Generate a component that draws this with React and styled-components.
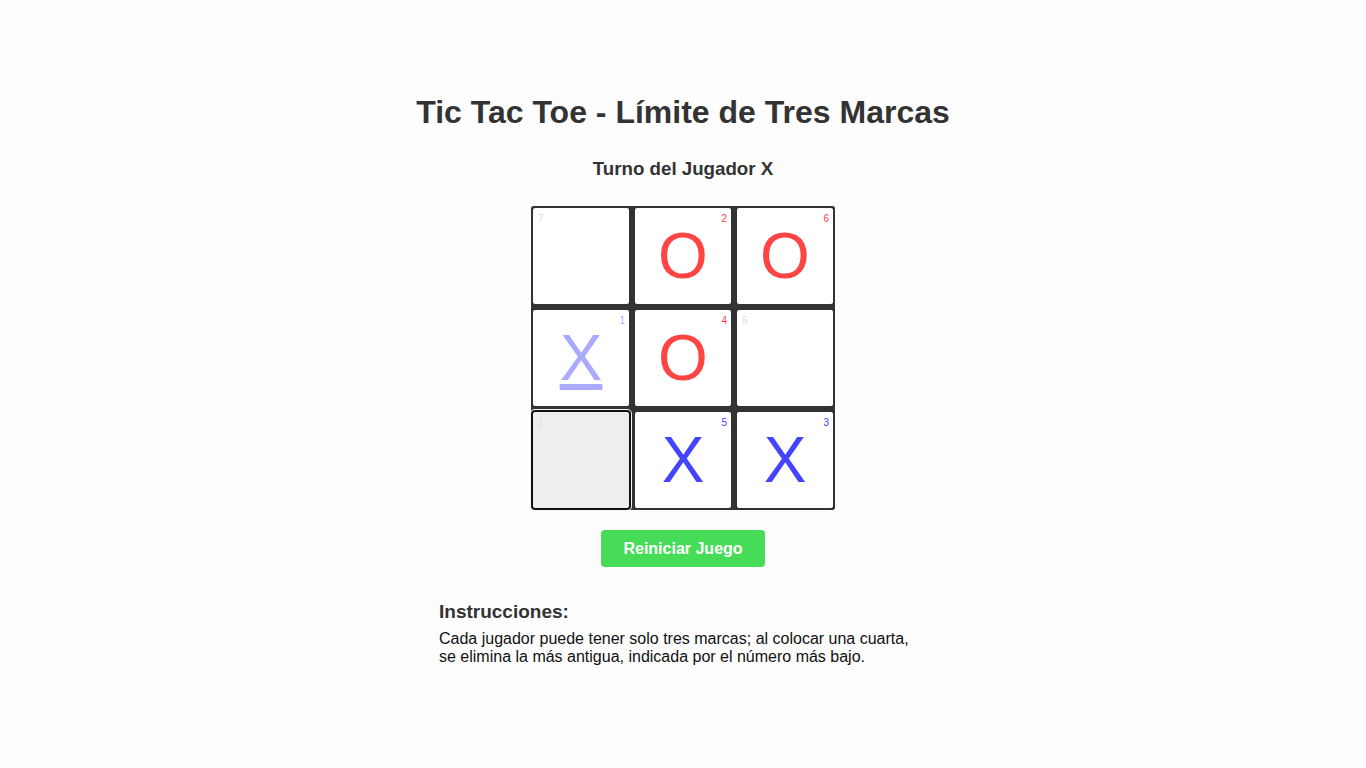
import React from "react";
import styled, { createGlobalStyle } from "styled-components";

const GlobalStyle = createGlobalStyle`
  body {
    margin: 0;
    background: #fdfdfd;
    font-family: "Liberation Sans", Arial, sans-serif;
  }
`;

const cells = [
  { mark: null, n: 7 },
  { mark: "O", n: 2 },
  { mark: "O", n: 6 },
  { mark: "X", n: 1, faded: true },
  { mark: "O", n: 4 },
  { mark: null, n: 6 },
  { mark: null, n: 1, hover: true },
  { mark: "X", n: 5 },
  { mark: "X", n: 3 }
];

const markColors = { X: "#4444ff", O: "#ff4444" };

const App = () => (
  <Page>
    <GlobalStyle />
    <Title>Tic Tac Toe - Límite de Tres Marcas</Title>
    <Turn>Turno del Jugador X</Turn>
    <Board>
      {cells.map((cell, i) => (
        <Cell key={i} $hover={cell.hover}>
          <Content $faded={cell.faded}>
            <Order $mark={cell.mark}>{cell.n}</Order>
            {cell.mark && (
              <Mark $mark={cell.mark} $faded={cell.faded}>
                {cell.mark}
              </Mark>
            )}
          </Content>
        </Cell>
      ))}
    </Board>
    <ResetButton type="button">Reiniciar Juego</ResetButton>
    <Instructions>
      <InstructionsTitle>Instrucciones:</InstructionsTitle>
      <InstructionsText>
        Cada jugador puede tener solo tres marcas; al colocar una cuarta, se
        elimina la más antigua, indicada por el número más bajo.
      </InstructionsText>
    </Instructions>
  </Page>
);

const Page = styled.div`
  display: flex;
  flex-direction: column;
  align-items: center;
  padding-top: 94px;
  color: #333;
`;

const Title = styled.h1`
  margin: 0 0 27px;
  font-size: 32px;
  font-weight: bold;
  color: #333;
`;

const Turn = styled.h3`
  margin: 0 0 26px;
  font-size: 18.72px;
  font-weight: bold;
  color: #333;
`;

const Board = styled.div`
  display: grid;
  grid-template-columns: repeat(3, 100px);
  grid-template-rows: repeat(3, 100px);
  gap: 2px;
  background: #333;
  border-radius: 3px;
  margin-bottom: 20px;
`;

const Cell = styled.div`
  position: relative;
  box-sizing: border-box;
  border: 2px solid ${p => (p.$hover ? "#111" : "#333")};
  border-radius: 4px;
  background: ${p => (p.$hover ? "#eee" : "#fff")};
  box-shadow: ${p => (p.$hover ? "0 0 0 1px #f4f4f4" : "none")};
`;

const Content = styled.div`
  width: 100%;
  height: 100%;
  display: flex;
  align-items: center;
  justify-content: center;
  opacity: ${p => (p.$faded ? 0.45 : 1)};
`;

const Order = styled.span`
  position: absolute;
  top: 5px;
  ${p => (p.$mark ? "right: 4px;" : "left: 5px;")}
  font-size: 10px;
  color: ${p => (p.$mark ? markColors[p.$mark] : "#ddd")};
`;

const Mark = styled.span`
  font-size: 64px;
  line-height: 1;
  color: ${p => markColors[p.$mark]};
  text-decoration: ${p => (p.$faded ? "underline" : "none")};
`;

const ResetButton = styled.button`
  height: 37px;
  padding: 0 22px;
  border: none;
  border-radius: 4px;
  background: #46dc58;
  color: #fff;
  font-family: "Liberation Sans", Arial, sans-serif;
  font-size: 16px;
  font-weight: bold;
  cursor: pointer;
  margin-bottom: 34px;
`;

const Instructions = styled.div`
  box-sizing: border-box;
  width: 500px;
  padding: 0 6px;
  text-align: left;
`;

const InstructionsTitle = styled.h3`
  margin: 0 0 7px;
  font-size: 19px;
  color: #333;
`;

const InstructionsText = styled.p`
  margin: 0;
  font-size: 16px;
  color: #111;
`;

export default App;
